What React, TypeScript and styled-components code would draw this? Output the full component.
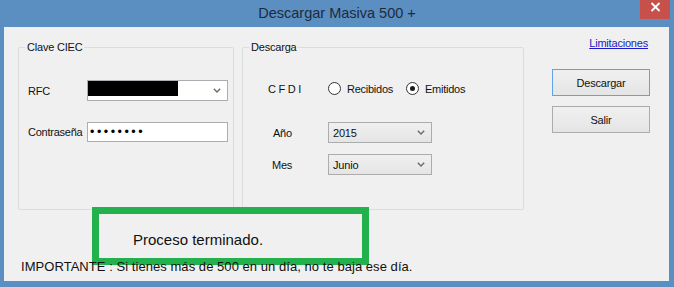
import styled, {createGlobalStyle} from "styled-components";

const GlobalStyle = createGlobalStyle`
  html,
  body {
    margin: 0;
    padding: 0;
  }

  body {
    width: 674px;
    height: 287px;
    overflow: hidden;
    font-family: "Liberation Sans", Arial, sans-serif;
  }
`;

const Window = styled.div`
  width: 674px;
  height: 287px;
  display: flex;
  flex-direction: column;
  background-color: #5b8ec1;
`;

const TitleBar = styled.div`
  height: 27px;
  display: grid;
  grid-template-columns: 1fr auto 1fr;
  align-items: start;
`;

const Title = styled.div`
  grid-column: 2;
  margin-top: 5px;
  font-size: 14.5px;
  line-height: 17px;
  color: #1d2b3c;
`;

const CloseButton = styled.div`
  grid-column: 3;
  justify-self: end;
  margin-right: 4px;
  width: 30px;
  height: 19px;
  background-color: #c7504b;
  color: #fff;
  display: flex;
  justify-content: center;
  padding-top: 2px;
  box-sizing: border-box;
`;

const Client = styled.div`
  flex: 1;
  margin: 0 5px 6px 4px;
  background-color: #f0f0f0;
  padding-top: 13px;
  display: flex;
  flex-direction: column;
`;

const TopRow = styled.div`
  display: flex;
  align-items: flex-start;
  padding-left: 14px;
`;

const Group = styled.fieldset<{$width: number; $gap?: number}>`
  margin: 0 0 0 ${(p) => p.$gap || 0}px;
  padding: 0;
  width: ${(p) => p.$width}px;
  height: 170px;
  box-sizing: border-box;
  border: 1px solid #dcdcdc;
  border-radius: 2px;
  min-width: 0;
`;

const Legend = styled.legend`
  margin-left: 6px;
  padding: 0 2px;
  font-size: 11px;
  letter-spacing: -0.2px;
  line-height: 14px;
  color: #111;
`;

const CiecGrid = styled.div`
  display: grid;
  grid-template-columns: 59px 141px;
  row-gap: 21px;
  align-items: center;
  padding: 26px 0 0 9px;
`;

const Label = styled.span<{$indent?: number}>`
  font-size: 11px;
  letter-spacing: -0.25px;
  color: #111;
  white-space: nowrap;
  padding-left: ${(p) => p.$indent || 0}px;
`;

const EditCombo = styled.div`
  height: 21px;
  box-sizing: border-box;
  border: 1px solid #abadb3;
  background-color: #fff;
  display: flex;
  align-items: flex-start;
  justify-content: space-between;
`;

const Redacted = styled.span`
  width: 90px;
  height: 15px;
  background-color: #000;
`;

const Chevron = styled.svg`
  flex: none;
  align-self: center;
  margin-right: 6px;
`;

const PasswordBox = styled.div`
  height: 20px;
  box-sizing: border-box;
  border: 1px solid #abadb3;
  background-color: #fff;
  padding-left: 2px;
  font-size: 12.5px;
  line-height: 18px;
  letter-spacing: 2.5px;
  color: #000;
`;

const DescargaBody = styled.div`
  display: flex;
  flex-direction: column;
`;

const FieldRow = styled.div<{$top: number}>`
  display: grid;
  grid-template-columns: 60px auto;
  align-items: center;
  padding-left: 25px;
  margin-top: ${(p) => p.$top}px;
`;

const RadioGroup = styled.div`
  display: flex;
  align-items: center;
`;

const RadioItem = styled.label<{$width?: number}>`
  display: flex;
  align-items: center;
  gap: 6px;
  width: ${(p) => (p.$width ? `${p.$width}px` : "auto")};
  font-size: 11px;
  letter-spacing: -0.25px;
  color: #111;
`;

const RadioCircle = styled.span<{$checked?: boolean}>`
  width: 13px;
  height: 13px;
  box-sizing: border-box;
  border-radius: 50%;
  border: 1px solid #333;
  background-color: #fff;
  display: flex;
  align-items: center;
  justify-content: center;

  &::after {
    content: "";
    display: ${(p) => (p.$checked ? "block" : "none")};
    width: 5px;
    height: 5px;
    border-radius: 50%;
    background-color: #1a1a1a;
  }
`;

const ListCombo = styled.div`
  width: 104px;
  height: 21px;
  box-sizing: border-box;
  border: 1px solid #acacac;
  background: linear-gradient(#f0f0f0, #e5e5e5);
  display: flex;
  align-items: center;
  justify-content: space-between;
  padding-left: 4px;
  font-size: 11px;
  letter-spacing: -0.2px;
  color: #111;
`;

const Side = styled.div`
  margin-left: 28px;
  width: 98px;
  display: flex;
  flex-direction: column;
`;

const LinkText = styled.a`
  align-self: flex-end;
  margin-top: -3px;
  margin-right: 2px;
  font-size: 11px;
  letter-spacing: -0.2px;
  line-height: 13px;
  color: #1a1ac8;
  text-decoration: underline;
  cursor: pointer;
`;

const Button = styled.button<{$default?: boolean; $top: number}>`
  margin-top: ${(p) => p.$top}px;
  height: 27px;
  box-sizing: border-box;
  border: 1px solid ${(p) => (p.$default ? "#5fa3e6" : "#acacac")};
  background: linear-gradient(#f0f0f0, #e5e5e5);
  font-family: "Liberation Sans", Arial, sans-serif;
  font-size: 11px;
  letter-spacing: -0.2px;
  color: #111;
  padding: 0;
`;

const StatusBox = styled.div`
  margin: -3px 0 0 88px;
  width: 277px;
  height: 58px;
  box-sizing: border-box;
  border: 7px solid #22b14c;
  padding: 17px 0 0 34px;
  font-size: 15px;
  line-height: 17px;
  color: #111;
`;

const Notice = styled.div`
  margin: -6px 0 0 17px;
  font-size: 13px;
  line-height: 15px;
  letter-spacing: 0.05px;
  color: #111;
`;

const ChevronIcon = () => (
  <Chevron width="8" height="5" viewBox="0 0 8 5">
    <polyline
      points="0.8,0.8 4,4 7.2,0.8"
      fill="none"
      stroke="#6b6b6b"
      strokeWidth="1.4"
    />
  </Chevron>
);

const App = () => {
  return (
    <>
      <GlobalStyle />
      <Window>
        <TitleBar>
          <Title>Descargar Masiva 500 +</Title>
          <CloseButton>
            <svg width="11" height="10" viewBox="0 0 11 10">
              <path
                d="M1.5 1 L9.5 9 M9.5 1 L1.5 9"
                stroke="#fff"
                strokeWidth="1.8"
              />
            </svg>
          </CloseButton>
        </TitleBar>
        <Client>
          <TopRow>
            <Group $width={216}>
              <Legend>Clave CIEC</Legend>
              <CiecGrid>
                <Label>RFC</Label>
                <EditCombo>
                  <Redacted />
                  <ChevronIcon />
                </EditCombo>
                <Label>Contraseña</Label>
                <PasswordBox>••••••••</PasswordBox>
              </CiecGrid>
            </Group>
            <Group $width={282} $gap={8}>
              <Legend>Descarga</Legend>
              <DescargaBody>
                <FieldRow $top={28}>
                  <Label>C F D I</Label>
                  <RadioGroup>
                    <RadioItem $width={78}>
                      <RadioCircle />
                      Recibidos
                    </RadioItem>
                    <RadioItem>
                      <RadioCircle $checked />
                      Emitidos
                    </RadioItem>
                  </RadioGroup>
                </FieldRow>
                <FieldRow $top={27}>
                  <Label $indent={5}>Año</Label>
                  <ListCombo>
                    2015
                    <ChevronIcon />
                  </ListCombo>
                </FieldRow>
                <FieldRow $top={11}>
                  <Label $indent={4}>Mes</Label>
                  <ListCombo>
                    Junio
                    <ChevronIcon />
                  </ListCombo>
                </FieldRow>
              </DescargaBody>
            </Group>
            <Side>
              <LinkText>Limitaciones</LinkText>
              <Button $default $top={19}>
                Descargar
              </Button>
              <Button $top={10}>Salir</Button>
            </Side>
          </TopRow>
          <StatusBox>Proceso terminado.</StatusBox>
          <Notice>
            IMPORTANTE : Si tienes más de 500 en un día, no te baja ese día.
          </Notice>
        </Client>
      </Window>
    </>
  );
};

export default App;
